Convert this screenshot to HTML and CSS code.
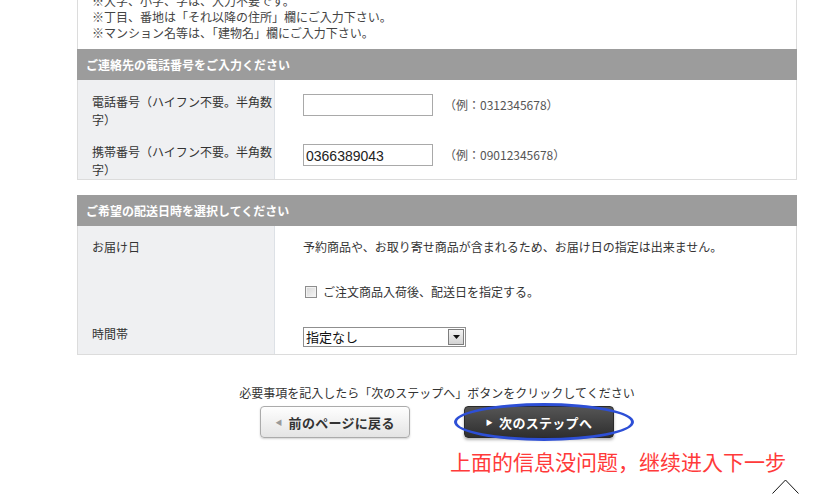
FILE: index.html
```html
<!DOCTYPE html>
<html lang="ja">
<head>
  <meta charset="UTF-8">
  <title>ご注文手続き</title>
  <link rel="stylesheet" href="styles.css">
</head>
<body>
  <div class="page">
    <div class="notes">
      ※大字、小字、字は、入力不要です。<br>
      ※丁目、番地は「それ以降の住所」欄にご入力下さい。<br>
      ※マンション名等は、「建物名」欄にご入力下さい。
    </div>

    <div class="section">
      <div class="sec-head">ご連絡先の電話番号をご入力ください</div>
      <div class="sec-body">
        <div class="label first">電話番号（ハイフン不要。半角数字）</div>
        <div class="value tel-cell">
          <input type="text" class="tel-input" value="">
          <span class="example">（例：0312345678）</span>
        </div>
        <div class="label">携帯番号（ハイフン不要。半角数字）</div>
        <div class="value tel-cell">
          <input type="text" class="tel-input" value="0366389043">
          <span class="example">（例：09012345678）</span>
        </div>
      </div>
    </div>

    <div class="section">
      <div class="sec-head">ご希望の配送日時を選択してください</div>
      <div class="sec-body">
        <div class="label date-label">お届け日</div>
        <div class="value date-cell">
          <p class="notice">予約商品や、お取り寄せ商品が含まれるため、お届け日の指定は出来ません。</p>
          <label class="check-line">
            <input type="checkbox" class="check">
            <span>ご注文商品入荷後、配送日を指定する。</span>
          </label>
        </div>
        <div class="label time-label">時間帯</div>
        <div class="value time-cell">
          <div class="select">
            <select>
              <option>指定なし</option>
              <option>午前中</option>
              <option>12時～14時</option>
            </select>
            <span class="select-btn">
              <svg width="7" height="4" viewBox="0 0 7 4"><path d="M0 0h7L3.5 4z" fill="#111"/></svg>
            </span>
          </div>
        </div>
      </div>
    </div>

    <p class="guide">必要事項を記入したら「次のステップへ」ボタンをクリックしてください</p>
    <div class="buttons">
      <button class="btn btn-back"><span class="arrow">◀</span>前のページに戻る</button>
      <button class="btn btn-next"><span class="arrow">▶</span>次のステップへ<span class="mark"></span></button>
    </div>
    <p class="memo">上面的信息没问题，继续进入下一步</p>
  </div>

  <a class="to-top" href="#">
    <svg width="28" height="15" viewBox="0 0 28 15"><polyline points="0.5,14.5 13.5,1 26.5,14.5" fill="none" stroke="#111" stroke-width="1"/></svg>
  </a>
</body>
</html>
```

FILE: styles.css
```css
body {
  margin: 0;
  padding: 0;
  background: #fff;
  color: #333;
  font-family: "Noto Sans CJK JP", "Liberation Sans", sans-serif;
  font-size: 12px;
}
.page {
  width: 720px;
  margin-left: 77px;
}
.notes {
  margin-top: -7px;
  padding: 0 15px 8px 14px;
  border-left: 1px solid #dcdcdc;
  border-right: 1px solid #dcdcdc;
  line-height: 16px;
  color: #444;
}
.section {
  margin-bottom: 15px;
}
.sec-head {
  height: 31px;
  line-height: 31px;
  padding-left: 9px;
  background: #9c9c9c;
  color: #fff;
  font-weight: bold;
}
.sec-body {
  display: grid;
  grid-template-columns: 197px 1fr;
  border: 1px solid #dcdcdc;
  border-top: none;
}
.label {
  background: #eff0f2;
  border-right: 1px solid #dde1e6;
  padding: 13px 0 0 14px;
  line-height: 18px;
}
.label.first {
  padding-bottom: 1px;
}
.value {
  padding-left: 28px;
}
.tel-cell {
  display: flex;
  align-items: flex-start;
  padding-top: 14px;
}
.tel-input {
  box-sizing: border-box;
  width: 130px;
  height: 22px;
  margin: 0;
  padding: 1px 2px 0;
  border: 1px solid #a9a9a9;
  font-family: "Liberation Sans", Arial, sans-serif;
  font-size: 14px;
  color: #222;
  outline: none;
}
.example {
  margin-left: 11px;
  line-height: 22px;
  color: #555;
}
.date-label {
  padding-top: 12px;
}
.date-cell {
  padding-top: 12px;
  padding-bottom: 12px;
  line-height: 18px;
}
.notice {
  margin: 0;
}
.check-line {
  display: flex;
  align-items: center;
  margin-top: 27px;
  padding-left: 2px;
}
.check {
  appearance: none;
  box-sizing: border-box;
  width: 12px;
  height: 12px;
  margin: 0 6px 0 0;
  border: 1px solid #8e8e8e;
  background: linear-gradient(135deg, #d6d6d6, #f7f7f7);
  box-shadow: inset 0 0 0 1px #f2f2f2;
}
.time-label {
  padding-top: 12px;
  padding-bottom: 5px;
}
.time-cell {
  padding-top: 14px;
  padding-bottom: 7px;
}
.select {
  position: relative;
  width: 163px;
  height: 20px;
}
.select select {
  appearance: none;
  box-sizing: border-box;
  width: 100%;
  height: 20px;
  margin: 0;
  padding: 0 0 0 2px;
  border: 1px solid #8f8f8f;
  border-radius: 0;
  background: #fff;
  font-family: "Noto Sans CJK JP", sans-serif;
  font-size: 13px;
  line-height: 18px;
  color: #111;
}
.select-btn {
  position: absolute;
  top: 2px;
  right: 2px;
  width: 14px;
  height: 14px;
  border: 1px solid #7d7d7d;
  background: linear-gradient(#f4f4f4, #d3d3d3);
  display: flex;
  align-items: center;
  justify-content: center;
  pointer-events: none;
}
.guide {
  margin: 29px 0 0;
  line-height: 18px;
  text-align: center;
  color: #333;
}
.buttons {
  display: flex;
  justify-content: center;
  gap: 54px;
  margin-top: 4px;
}
.btn {
  position: relative;
  box-sizing: border-box;
  width: 150px;
  height: 32px;
  border-radius: 4px;
  font-family: "Noto Sans CJK JP", sans-serif;
  font-size: 13px;
  font-weight: bold;
  letter-spacing: 0.3px;
  display: flex;
  align-items: center;
  justify-content: center;
  cursor: pointer;
}
.btn .arrow {
  font-size: 7px;
  margin-right: 6px;
}
.btn-back {
  border: 1px solid #ababab;
  background: linear-gradient(#fefefe, #e4e4e4);
  color: #333;
  box-shadow: 0 1px 2px rgba(0,0,0,0.18);
}
.btn-back .arrow {
  color: #9a9a9a;
}
.btn-next {
  border: 1px solid #2a2a2a;
  background: linear-gradient(#555, #2f2f2f);
  color: #fff;
  box-shadow: 0 2px 3px rgba(0,0,0,0.3);
}
.btn-next .mark {
  position: absolute;
  left: -11px;
  top: -4px;
  width: 174px;
  height: 32px;
  border: 3px solid #2d4fd6;
  border-radius: 50%;
  pointer-events: none;
}
.memo {
  margin: 10px 0 0 373px;
  font-family: "Noto Sans CJK SC", sans-serif;
  font-size: 21px;
  line-height: 26px;
  color: #ff3a3a;
  white-space: nowrap;
}
.to-top {
  position: fixed;
  right: 30px;
  bottom: 0;
  line-height: 0;
}
```
